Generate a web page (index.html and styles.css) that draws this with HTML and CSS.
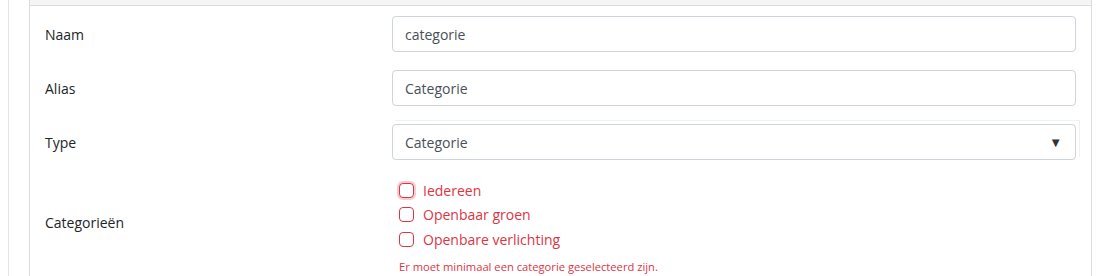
FILE: index.html
```html
<!DOCTYPE html>
<html lang="nl">
<head>
    <meta charset="UTF-8">
    <meta name="viewport" content="width=device-width, initial-scale=1.0">
    <title>Categorie bewerken</title>
    <link rel="stylesheet" href="styles.css">
</head>
<body>

    <div class="wrapper">
        <div class="card">
            <div class="card-header"></div>

            <div class="card-body">
                <div class="form-row">
                    <label class="form-label" for="naam">Naam</label>
                    <input class="form-input" type="text" id="naam" value="categorie">
                </div>

                <div class="form-row">
                    <label class="form-label" for="alias">Alias</label>
                    <input class="form-input" type="text" id="alias" value="Categorie">
                </div>

                <div class="form-row">
                    <label class="form-label">Type</label>
                    <div class="select-wrap">
                        <div class="form-select">
                            <span>Categorie</span>
                            <span class="select-arrow">&#9660;</span>
                        </div>
                    </div>
                </div>

                <!-- Categorieën: minstens één moet aangevinkt zijn -->
                <div class="form-row checks-row">
                    <label class="form-label">Categorieën</label>
                    <div class="checks">
                        <label class="check">
                            <span class="check-box focused"></span>
                            <span>Iedereen</span>
                        </label>
                        <label class="check">
                            <span class="check-box"></span>
                            <span>Openbaar groen</span>
                        </label>
                        <label class="check">
                            <span class="check-box"></span>
                            <span>Openbare verlichting</span>
                        </label>
                        <div class="invalid-feedback">Er moet minimaal een categorie geselecteerd zijn.</div>
                    </div>
                </div>
            </div>
        </div>
    </div>

</body>
</html>
```

FILE: styles.css
```css
body {
    margin: 0;
    font-family: "Open Sans", Arial, sans-serif;
    font-size: 14px;
    color: #212529;
    background-color: white;
}
.wrapper {
    margin-left: 8px;
    padding-left: 20px;
    border-left: 1px solid #e4e4e4;
    height: 276px;
}
.card {
    margin-right: 5px;
    border-left: 1px solid #dcdcdc;
    border-right: 1px solid #dcdcdc;
    height: 100%;
}
.card-header {
    height: 5px;
    background-color: #f5f5f5;
    border-bottom: 1px solid #dcdcdc;
}
.card-body {
    padding: 10px 15px 0 15px;
}
.form-row {
    display: flex;
    align-items: center;
    margin-bottom: 18px;
}
.form-label {
    width: 347px;
    flex-shrink: 0;
}
.form-input,
.form-select {
    flex: 1;
    box-sizing: border-box;
    height: 36px;
    padding: 0 12px;
    border: 1px solid #ced4da;
    border-radius: 4px;
    font-family: inherit;
    font-size: 14px;
    color: #495057;
}
.select-wrap {
    flex: 1;
    display: flex;
    position: relative;
}
.select-wrap::after {
    content: "";
    position: absolute;
    top: -4px;
    right: -4px;
    left: 3px;
    bottom: 3px;
    border-top: 1px solid #eef1f5;
    border-right: 1px solid #eef1f5;
    pointer-events: none;
}
.form-select {
    display: flex;
    align-items: center;
    justify-content: space-between;
    padding-right: 13px;
}
.select-arrow {
    font-size: 13px;
    color: #333;
}
.checks-row .form-label {
    padding-bottom: 6px;
}
.checks {
    flex: 1;
    padding-left: 7px;
}
.check {
    display: flex;
    align-items: center;
    height: 24.5px;
    color: #dc3545;
}
.check-box {
    width: 15px;
    height: 15px;
    box-sizing: border-box;
    border: 1px solid #dc3545;
    border-radius: 4px;
    margin-right: 9px;
    background-color: white;
}
.check-box.focused {
    box-shadow: 0 0 0 2px rgba(220, 53, 69, 0.25);
}
.invalid-feedback {
    margin-top: 7px;
    font-size: 11.2px;
    color: #dc3545;
}
```
